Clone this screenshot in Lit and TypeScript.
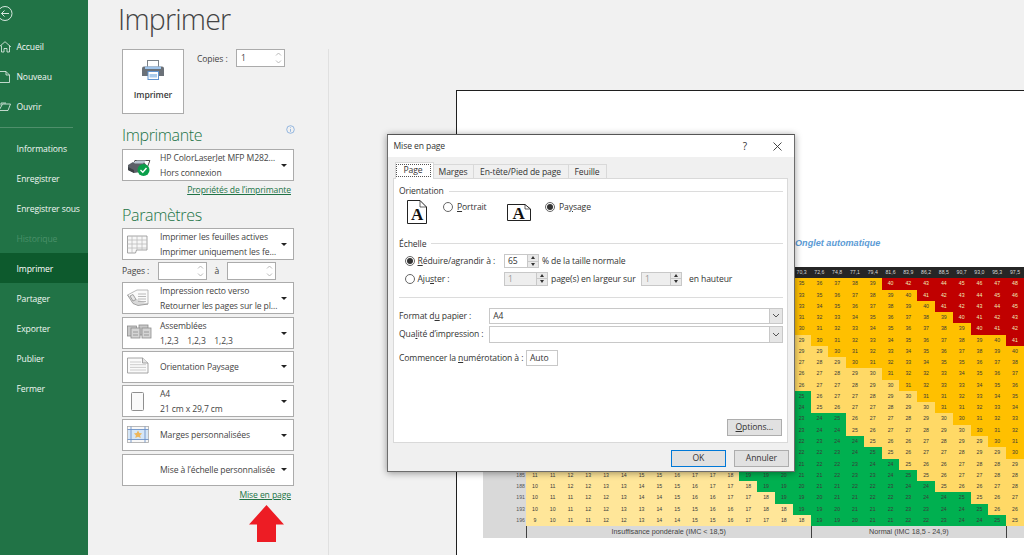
import { LitElement, html, css, svg } from "lit";
import { customElement } from "lit/decorators.js";

const navTop = [
  { t: "Accueil", i: svg`<path d="M-1 6 L5 .7 L11 6 M1.5 4.5 V11 H4 V7.5 H7 V11 H9.5 V4.5" />` },
  { t: "Nouveau", i: svg`<path d="M0 .5 H6 L9.5 4 V11.5 H0 M6 .5 V4 H9.5" />` },
  { t: "Ouvrir", i: svg`<path d="M-1 9.5 L2.5 3 H10.5 L8 9.5 Z M1 4.5 V2 H6" />` },
];
const navBottom = ["Informations", "Enregistrer", "Enregistrer sous", "Historique", "Imprimer", "Partager", "Exporter", "Publier", "Fermer"];

const g = "#8f8f8f";
const iconSheet = svg`<g fill="none" stroke="${g}" stroke-width=".8"><path d="M.5 1H20V15H9.5L8.5 18H.5Z" fill="#f7f7f7"/><path d="M.5 5H20M.5 9H20M.5 13H20M5 1V18M10 1V15M15 1V15" stroke="#bdbdbd"/></g>`;
const iconDuplex = svg`<g stroke="${g}" stroke-width=".8"><path d="M.5 6L10 1H21V15H10Z" fill="#fafafa" stroke="#a8a8a8"/><path d="M.5 6L6 14.5 11 16.5 21 15" fill="#d8d8d8"/><path d="M11 5H19M11 7.5H19M11 10H19M11 12.5H19" stroke="#a8a8a8"/><path d="M3 7l3-1.5 3 5-3 1.5z" fill="#e6e6e6"/></g>`;
const iconCollate = svg`<g stroke="#8c8c8c" stroke-width=".8" fill="#c8c8c8"><rect x=".5" y="2" width="9" height="10"/><rect x="12" y="1" width="9" height="10"/><rect x="4" y="4" width="9" height="10" fill="#d4d4d4"/><rect x="15" y="4" width="9" height="10" fill="#d4d4d4"/><path d="M6 8H11M6 11H11M17 8H22M17 11H22" fill="none"/></g>`;
const iconLand = svg`<g fill="#fafafa" stroke="${g}" stroke-width=".8"><path d="M.5 1H15.5L21 6V16H.5Z"/><path d="M15.5 1V6H21" fill="#e4e4e4"/><path d="M3 5H14M3 7.7H19M3 10.4H19M3 13H19" stroke="#c0c0c0"/></g>`;
const iconPage = svg`<rect x="4.5" y=".5" width="12" height="18" rx="1" fill="#fafafa" stroke="${g}" />`;
const iconMargin = svg`<rect x=".5" y=".5" width="21" height="16" fill="#f8f8f8" stroke="#a9a9a9" stroke-width=".8"/><rect x="1" y="3.5" width="20" height="10" fill="#d5e6f7"/><path d="M4 .5V16.5M18 .5V16.5M.5 3.5H21.5M.5 13.5H21.5" stroke="#6d92c7" stroke-width=".9" fill="none"/><path d="M11 4.5l1.3 2.6 2.8.3-2 1.9.6 2.8-2.7-1.4-2.7 1.4.6-2.8-2-1.9 2.8-.3z" fill="#eeb65a"/>`;
const iconPrinter = svg`<rect x="4.5" y="4.5" width="15" height="10" fill="#fff" stroke="#333" stroke-width=".8" transform="skewX(-20) translate(5 0)"/><path d="M1 9L6 6H17L20 10V15L7 17L1 14Z" fill="#5b6067"/><path d="M1 11L7 14V17L1 14Z" fill="#3c4045"/><path d="M6 6.5L10 4.5H19L16 7.5H8Z" fill="#b8c4cf"/><circle cx="16.5" cy="14" r="6" fill="#0a9f4a"/><path d="M13.5 14L15.8 16.2 19.5 12" fill="none" stroke="#fff" stroke-width="1.4"/>`;

const drops = [
  { icon: iconDuplex, a: "Impression recto verso", b: "Retourner les pages sur le pl…" },
  { icon: iconCollate, a: "Assemblées", b: "1,2,3 \u00a0 \u00a01,2,3 \u00a0 \u00a01,2,3" },
  { icon: iconLand, a: "Orientation Paysage" },
  { icon: iconPage, a: "A4", b: "21 cm x 29,7 cm" },
  { icon: iconMargin, a: "Marges personnalisées" },
  { icon: null, a: "Mise à l’échelle personnalisée" },
];

const COLS = 28;
const ROWS = 22;
/* Weights advance in 5 lb steps, heights in 1 in steps; both are rounded before the BMI is computed. */
const kg = (i: number) => Math.round((80 + 5 * i) * 4.5359) / 10;
const cm = (r: number) => Math.round((56 + r) * 2.54);
function cellClass(b: number) {
  if (b >= 40) return "red";
  if (b >= 30) return "orange";
  if (b >= 25) return "yellow";
  if (b >= 18.5) return "green";
  return "pale";
}

@customElement("app-root")
export class AppRoot extends LitElement {
  static styles = css`
    :host { display: block; width: 1024px; height: 555px; overflow: hidden; position: relative; background: #f1f1f1;
      font-family: "Open Sans", "Noto Sans", sans-serif; font-size: 8.6px; letter-spacing: -0.11px; color: #444; }
    * { box-sizing: border-box; }
    .app { display: flex; width: 1024px; height: 555px; }
    nav { width: 88px; flex: none; background: #217346; color: #f2f7f4; }
    .back { height: 31px; display: block; }
    .back svg { display: block; }
    .ni { height: 30px; display: flex; align-items: center; padding: 1.5px 0 0 16.5px; position: relative; }
    .ni.ic { padding-left: 0; }
    .ni svg { width: 11px; height: 12px; margin-right: 5.5px; overflow: visible; fill: none; stroke: #eaf3ee; stroke-width: .8; }
    .ni.dis { color: #4a9069; }
    .ni.sel { background: #0d5a2d; color: #fff; }
    .navsep { height: 1px; background: #4f8f6b; width: 73px; margin: 6px 0 5px; }

    .left { width: 240px; flex: none; padding-left: 34px; position: relative; }
    .title { height: 49px; font-size: 28.5px; letter-spacing: -0.8px; font-weight: 300; line-height: 39px; color: #444; margin-left: -4px; white-space: nowrap; }
    .printrow { height: 64.5px; display: flex; align-items: flex-start; }
    .printbtn { width: 62px; height: 64.5px; background: #fff; border: 1px solid #ababab; display: flex; flex-direction: column; align-items: center; padding-top: 9.5px; font-weight: 600; color: #3a3a3a; }
    .printbtn svg { display: block; margin-bottom: 9px; }
    .copies { margin-left: 13px; height: 20px; line-height: 20px; width: 39px; white-space: nowrap; }
    .num { background: #fff; border: 1px solid #ababab; height: 18px; display: flex; align-items: center; justify-content: space-between; padding: 0 2px 0 4px; position: relative; color: #444; }
    .num svg { display: block; flex: none; }
    h2 { margin: 0; font-weight: 300; font-size: 16px; letter-spacing: -0.35px; color: #217346; height: 24.5px; line-height: 21px; white-space: nowrap; }
    .h1 { margin-top: 11px; }
    .h3 { height: 25px; line-height: 24px; margin-top: 5.5px; }
    .dd { width: 172px; height: 32px; background: #fff; border: 1px solid #ababab; display: grid; grid-template-columns: 37px 1fr 12px; align-items: center; color: #444; }
    .dd .ico { display: flex; justify-content: flex-start; padding-left: 4px; }
    .dd .ico svg { display: block; overflow: visible; }
    .dd .tx { line-height: 15px; white-space: nowrap; padding-top: 1px; }
    .caret { width: 0; height: 0; border-left: 3px solid transparent; border-right: 3px solid transparent; border-top: 3px solid #222; }
    .link { height: 16px; line-height: 16px; text-align: right; width: 169px; color: #217346; text-decoration: underline; margin-top: .5px; }
    .pagesrow { height: 22.3px; display: flex; align-items: center; width: 172px; }
    .pagesrow .lab { width: 36px; }
    .pagesrow .num { width: 49px; }
    .pagesrow .a { width: 19.5px; text-align: center; }
    .stack { display: flex; flex-direction: column; gap: 2.3px; }
    .mep { height: 19.5px; line-height: 19px; text-align: right; width: 169px; color: #217346; text-decoration: underline; }
    .arrow { display: block; margin-left: 127px; }
    .info { position: absolute; left: 197.5px; top: 124.5px; }

    .preview { flex: 1; border-left: 1px solid #e0e0e0; margin-top: 49px; padding: 41px 0 0 126.5px; overflow: hidden; }
    .paper { width: 600px; height: 470px; background: #fff; border-left: 1px solid #1f1f1f; border-top: 1px solid #1f1f1f; padding: 147px 0 0 26.5px; }
    .ongl { height: 29px; margin-left: 312px; color: #5b9bd5; font-style: italic; font-weight: 700; font-size: 9.1px; line-height: 10px; letter-spacing: 0; font-family: "Liberation Sans", sans-serif; white-space: nowrap; }
    .sheet { display: grid; grid-template-columns: 43px repeat(${COLS}, 17.786px); grid-auto-rows: 11.27px; width: 541px;
      font-family: "Liberation Sans", sans-serif; font-size: 5.2px; letter-spacing: 0; color: #3a3a3a; text-align: center; line-height: 11.27px; }
    .sheet > div { min-width: 0; }
    .hd { background: #262626; color: #d8d8d8; height: 10.8px; line-height: 10.8px; align-self: end; }
    .lb { background: #d9d9d9; text-align: right; padding-right: 1px; color: #555; }
    .red { background: #c00000; color: #eeb; }
    .orange { background: #ffc000; }
    .yellow { background: #ffd966; }
    .green { background: #00b050; }
    .pale { background: #ffe699; }
    .ft { background: #d9d9d9; height: 12px; line-height: 12px; font-size: 7.2px; color: #444; border-left: 1px solid #404040; white-space: nowrap; }
    .ft0 { background: #d9d9d9; height: 12px; }

    .dlg { position: absolute; left: 387px; top: 134px; width: 407.5px; height: 338px; background: #f0f0f0; border: 1px solid #6d6d6d; border-top-color: #555; box-shadow: 0 1px 7px rgba(0,0,0,.4); display: flex; flex-direction: column; color: #333; }
    .tbar { height: 22px; background: #fff; display: flex; align-items: center; padding-left: 5.5px; flex: none; }
    .tbar .sp { flex: 1; }
    .tbar .q { margin-right: 26px; font-size: 10px; }
    .tbar svg { display: block; margin-right: 11.5px; }
    .tabs { display: flex; align-items: flex-end; height: 21px; margin-left: 6.5px; flex: none; }
    .tab { height: 14px; line-height: 14px; text-align: center; background: #f0f0f0; border: 1px solid #d9d9d9; border-bottom: 0; margin-left: -1px; white-space: nowrap; }
    .tab.on { height: 17px; margin-left: 0; background: #fff; position: relative; z-index: 1; margin-bottom: -1px; padding: 1px 2px 0 0; }
    .tab.on span { display: block; height: 12.5px; line-height: 12px; outline: 1px dotted #555; outline-offset: -1px; }
    .body { margin-left: 5px; width: 394.5px; height: 265px; background: #fff; border: 1px solid #d9d9d9; padding: 5px 4px 6.3px 5px; display: flex; flex-direction: column; flex: none; }
    .leg { height: 14px; display: flex; align-items: center; gap: 5px; }
    .leg::after { content: ""; flex: 1; height: 1px; background: #dcdcdc; }
    .orient { height: 30px; flex: none; display: flex; align-items: flex-start; }
    .orient svg.ic { display: block; flex: none; }
    .rad { width: 10px; height: 10px; border: 1px solid #666; border-radius: 50%; background: #fff; flex: none; display: flex; align-items: center; justify-content: center; }
    .rad.on::after { content: ""; width: 6px; height: 6px; border-radius: 50%; background: #333; }
    .rl { display: flex; align-items: center; gap: 4px; white-space: nowrap; }
    u { text-underline-offset: 1px; }
    .scale { display: flex; align-items: center; height: 14px; white-space: nowrap; }
    .scale .rl { width: 99.5px; margin-left: 5.5px; gap: 3px; }
    .spin { height: 14px; background: #fff; border: 1px solid #c8c8c8; display: flex; align-items: center; justify-content: space-between; padding-left: 3px; flex: none; }
    .spin.off { background: #eeeeee; color: #999; }
    .spin .btns { display: flex; flex-direction: column; width: 11px; height: 100%; border-left: 1px solid #c8c8c8; background: #e9e9e9; }
    .spin .btns i { flex: 1; display: flex; align-items: center; justify-content: center; }
    .spin .btns i:first-child { border-bottom: 1px solid #c8c8c8; }
    .up { width: 0; height: 0; border: 2.2px solid transparent; border-top: 0; border-bottom: 3px solid #333; }
    .dn { width: 0; height: 0; border: 2.2px solid transparent; border-bottom: 0; border-top: 3px solid #333; }
    .hr { height: 1px; background: #dcdcdc; margin-top: 11.5px; width: 384px; flex: none; }
    .fmt { display: flex; align-items: center; height: 16.3px; flex: none; }
    .fmt .l { width: 90.3px; white-space: nowrap; }
    .sel2 { width: 293.5px; height: 100%; background: #fff; border: 1px solid #c8c8c8; display: flex; align-items: center; justify-content: space-between; padding-left: 3px; }
    .sel2 .b { width: 12.5px; height: 100%; background: #e6e6e6; border-left: 1px solid #c8c8c8; display: flex; align-items: center; justify-content: center; }
    .start { display: flex; align-items: center; height: 15.7px; flex: none; }
    .start .l { width: 127px; white-space: nowrap; }
    .start .v { width: 32px; height: 100%; background: #fff; border: 1px solid #c8c8c8; padding-left: 3px; line-height: 14px; }
    .btn { width: 55.4px; height: 16.7px; background: #e1e1e1; border: 1px solid #adadad; text-align: center; line-height: 14.7px; color: #333; flex: none; }
    .btn.ok { border: 1px solid #0078d7; }
    .opt { align-self: flex-end; margin-top: auto; margin-right: 0.5px; }
    .foot { display: flex; justify-content: flex-end; gap: 7.6px; padding: 7px 4.5px 0 0; }
  `;

  private spinner() {
    return html`<svg width="7" height="14" viewBox="0 0 7 14" fill="none" stroke="#a8a8a8" stroke-width=".8"><path d="M1 4.5L3.5 2 6 4.5M1 9.5L3.5 12 6 9.5"/></svg>`;
  }

  private table() {
    const cells = [];
    cells.push(html`<div class="ft0"></div>`);
    for (let c = 0; c < COLS; c++) {
      cells.push(html`<div class="hd">${kg(c).toFixed(1).replace(".", ",")}</div>`);
    }
    for (let r = 0; r < ROWS; r++) {
      const h = cm(r);
      const m2 = (h / 100) * (h / 100);
      cells.push(html`<div class="lb">${h}</div>`);
      for (let c = 0; c < COLS; c++) {
        const b = kg(c) / m2;
        cells.push(html`<div class=${cellClass(b)}>${Math.round(b)}</div>`);
      }
    }
    return html`<div class="sheet">
      ${cells}
      <div class="ft0"></div>
      <div class="ft" style="grid-column: span 16">Insuffisance pondérale (IMC &lt; 18,5)</div>
      <div class="ft" style="grid-column: span 11">Normal (IMC 18,5 - 24,9)</div>
      <div class="ft" style="grid-column: span 1"></div>
    </div>`;
  }

  private dialog() {
    const chev = html`<svg width="8" height="5" viewBox="0 0 8 5" fill="none" stroke="#555" stroke-width="1"><path d="M1 1L4 4 7 1"/></svg>`;
    const btns = html`<span class="btns"><i><b class="up"></b></i><i><b class="dn"></b></i></span>`;
    return html`<div class="dlg">
      <div class="tbar">Mise en page<span class="sp"></span><span class="q">?</span>
        <svg width="9" height="9" viewBox="0 0 9 9" stroke="#333" stroke-width=".9"><path d="M.5.5L8.5 8.5M8.5.5L.5 8.5"/></svg>
      </div>
      <div class="tabs">
        <div class="tab on" style="width:39px"><span>Page</span></div>
        <div class="tab" style="width:41px">Marges</div>
        <div class="tab" style="width:96px">En-tête/Pied de page</div>
        <div class="tab" style="width:39px">Feuille</div>
      </div>
      <div class="body">
        <div class="leg">Orientation</div>
        <div class="orient">
          <svg class="ic" style="margin:2px 0 0 8px" width="20" height="24" viewBox="0 0 20 24"><path d="M.5.5H13L19.5 7V23.5H.5Z" fill="#fff" stroke="#222"/><path d="M13 .5V7H19.5" fill="none" stroke="#222" stroke-width=".7"/><text x="10" y="20" text-anchor="middle" font-family="Liberation Serif, serif" font-weight="700" font-size="17" fill="#111">A</text></svg>
          <div class="rl" style="margin:3px 0 0 16px;width:64px"><span class="rad"></span><span><u>P</u>ortrait</span></div>
          <svg class="ic" style="margin:5.5px 0 0 0" width="24" height="17" viewBox="0 0 24 17"><path d="M.5.5H18L23.5 5V16.5H.5Z" fill="#fff" stroke="#222"/><path d="M18 .5V5H23.5" fill="none" stroke="#222" stroke-width=".7"/><text x="11.5" y="15" text-anchor="middle" font-family="Liberation Serif, serif" font-weight="700" font-size="17" fill="#111">A</text></svg>
          <div class="rl" style="margin:3px 0 0 14px"><span class="rad on"></span><span>Pa<u>y</u>sage</span></div>
        </div>
        <div class="leg" style="margin-top:8.5px">Échelle</div>
        <div class="scale" style="margin-top:3.5px">
          <div class="rl"><span class="rad on"></span><span><u>R</u>éduire/agrandir à :</span></div>
          <div class="spin" style="width:35px">65${btns}</div>
          <span style="margin-left:3px">% de la taille normale</span>
        </div>
        <div class="scale" style="margin-top:3.5px">
          <div class="rl"><span class="rad"></span><span>Aju<u>s</u>ter :</span></div>
          <div class="spin off" style="width:44px">1${btns}</div>
          <span style="margin-left:3px;width:90px">page(s) en largeur sur</span>
          <div class="spin off" style="width:41px">1${btns}</div>
          <span style="margin-left:7px">en hauteur</span>
        </div>
        <div class="hr"></div>
        <div class="fmt" style="margin-top:9.5px"><span class="l">Format d<u>u</u> papier :</span><div class="sel2">A4<span class="b">${chev}</span></div></div>
        <div class="fmt" style="margin-top:2.5px"><span class="l">Qua<u>l</u>ité d’impression :</span><div class="sel2"><span></span><span class="b">${chev}</span></div></div>
        <div class="start" style="margin-top:7.7px"><span class="l">Commencer la <u>n</u>umérotation à :</span><div class="v">Auto</div></div>
        <div class="btn opt"><u>O</u>ptions…</div>
      </div>
      <div class="foot"><div class="btn ok">OK</div><div class="btn">Annuler</div></div>
    </div>`;
  }

  render() {
    const caret = html`<span class="caret"></span>`;
    return html`<div class="app">
      <nav>
        <div class="back"><svg width="20" height="31" viewBox="0 0 20 31" fill="none" stroke="#eaf3ee" stroke-width=".9"><circle cx="5" cy="13.5" r="7"/><path d="M9 13.5H1.5M4.5 10.5L1.5 13.5 4.5 16.5"/></svg></div>
        ${navTop.map((n) => html`<div class="ni ic"><svg viewBox="0 0 11 12">${n.i}</svg>${n.t}</div>`)}
        <div class="navsep"></div>
        ${navBottom.map((n) => html`<div class="ni ${n === "Historique" ? "dis" : ""} ${n === "Imprimer" ? "sel" : ""}">${n}</div>`)}
      </nav>
      <section class="left">
        <div class="title">Imprimer</div>
        <div class="printrow">
          <div class="printbtn">
            <svg width="22" height="20" viewBox="0 0 22 20"><rect x="5.5" y=".5" width="11" height="7" fill="#fff" stroke="#7c8288"/><path d="M0 8.5A2 2 0 0 1 2 6.5H20A2 2 0 0 1 22 8.5V16H0Z" fill="#6b7178"/><rect x="3" y="6.5" width="16" height="2.5" fill="#9fc4ea"/><rect x="6" y="11.5" width="10.5" height="8" fill="#fff" stroke="#5f93cf"/><rect x="7.5" y="14" width="7.5" height="3.5" fill="#a9cbec"/></svg>
            Imprimer
          </div>
          <span class="copies">Copies :</span>
          <div class="num" style="width:49px">1${this.spinner()}</div>
        </div>
        <h2 class="h1">Imprimante</h2>
        <svg class="info" width="9" height="9" viewBox="0 0 9 9" fill="none" stroke="#6f9fd8" stroke-width=".7"><circle cx="4.5" cy="4.5" r="3.8"/><path d="M4.5 4V6.8M4.5 2.3V3.1"/></svg>
        <div class="dd"><span class="ico"><svg width="23" height="20" viewBox="0 0 23 20">${iconPrinter}</svg></span><div class="tx">HP ColorLaserJet MFP M282…<br />Hors connexion</div>${caret}</div>
        <div class="link">Propriétés de l’imprimante</div>
        <h2 class="h3">Paramètres</h2>
        <div class="dd"><span class="ico"><svg width="22" height="19" viewBox="0 0 22 19">${iconSheet}</svg></span><div class="tx">Imprimer les feuilles actives<br />Imprimer uniquement les fe…</div>${caret}</div>
        <div class="pagesrow"><span class="lab">Pages :</span><div class="num"><span></span>${this.spinner()}</div><span class="a">à</span><div class="num"><span></span>${this.spinner()}</div></div>
        <div class="stack">
          ${drops.map((d) => html`<div class="dd"><span class="ico">${d.icon ? html`<svg width="24" height="19" viewBox="0 0 24 19">${d.icon}</svg>` : ""}</span><div class="tx">${d.a}${d.b ? html`<br />${d.b}` : ""}</div>${caret}</div>`)}
        </div>
        <div class="mep">Mise en page</div>
        <svg class="arrow" width="35" height="37" viewBox="0 0 35 37"><path d="M17.5 0L35 19.5H27V37H8V19.5H0Z" fill="#ed1c24"/></svg>
      </section>
      <section class="preview">
        <div class="paper">
          <div class="ongl">Onglet automatique</div>
          ${this.table()}
        </div>
      </section>
    </div>
    ${this.dialog()}`;
  }
}
